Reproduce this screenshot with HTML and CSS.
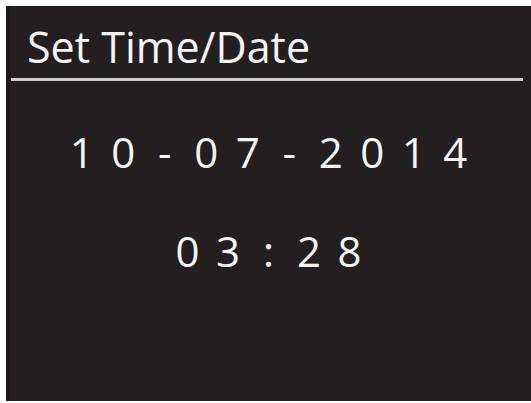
FILE: index.html
```html
<!DOCTYPE html>
<html>
<head>
<meta charset="utf-8">
<link rel="stylesheet" href="styles.css">
</head>
<body>
<div class="screen">
  <div class="title">Set Time/Date</div>
  <div class="rule"></div>
  <div class="row date">
    <span>1</span><span>0</span><span>-</span><span>0</span><span>7</span><span>-</span><span>2</span><span>0</span><span>1</span><span>4</span>
  </div>
  <div class="row time">
    <span>0</span><span>3</span><span>:</span><span>2</span><span>8</span>
  </div>
</div>
</body>
</html>
```
FILE: styles.css
```css
html, body {
  margin: 0;
  padding: 0;
  background: #ffffff;
}
body {
  width: 531px;
  height: 403px;
  overflow: hidden;
  font-family: "Open Sans", "Noto Sans", sans-serif;
}
.screen {
  margin: 6px 0 0 6px;
  width: 525px;
  height: 395px;
  background: #231f20;
  color: #f4f4f4;
  box-shadow: inset 4px 0 0 #1b1819;
  overflow: hidden;
}
.title {
  padding: 19px 0 0 21px;
  font-size: 43px;
  font-weight: 500;
  line-height: 43px;
  white-space: nowrap;
}
.rule {
  margin: 10px 8px 0 5px;
  height: 3px;
  background: #cdcdcd;
}
.row {
  display: flex;
  justify-content: center;
  font-size: 42px;
  font-weight: 500;
  line-height: 42px;
}
.row span {
  display: block;
  text-align: center;
}
.date {
  margin-top: 50px;
}
.date span {
  width: 41.5px;
}
.time {
  margin-top: 57px;
}
.time span {
  width: 40.5px;
}
```
